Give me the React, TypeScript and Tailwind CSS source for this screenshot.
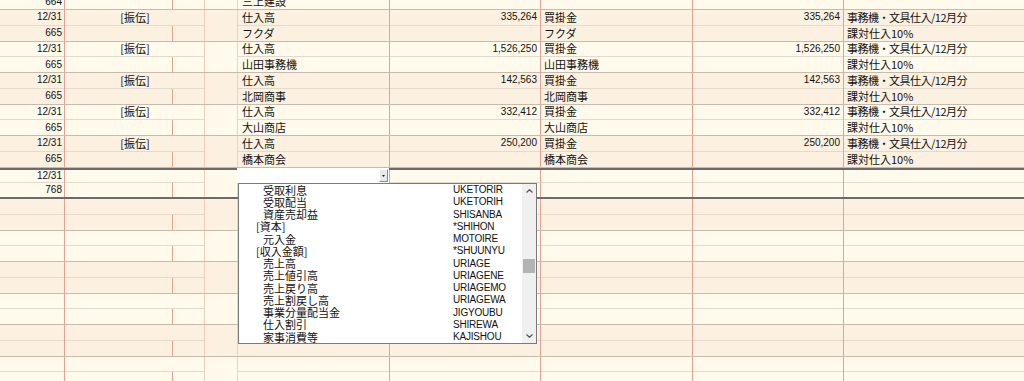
import React from "react";

type Line = { a?: string; b?: string; d?: string; e?: string; f?: string; g?: string; h?: React.ReactNode };

const jp = "font-['Noto_Sans_CJK_JP',sans-serif] text-[11px] leading-none whitespace-nowrap";
const num = "font-['Liberation_Sans',sans-serif] text-[10px] leading-none whitespace-nowrap";
const inner = "border-b border-[#e3dacd]";
const red = "border-r border-[#e2a393]";

function Entry({
  top = {},
  bottom = {},
  light,
  current,
}: {
  top?: Line;
  bottom?: Line;
  light?: boolean;
  current?: boolean;
}) {
  // first row height includes its 1px inner border (border-box)
  const h1 = current ? "h-[13.75px]" : "h-[15.75px]";
  const h2 = current ? "h-[13.9px]" : "h-[14.75px]";
  const bg = light ? "bg-[#fffaec]" : "bg-[#fcf1e0]";
  const edge = current ? "border-y-2 border-[#6b6b6b]" : "border-b border-[#c7bbad]";

  return (
    <div className={`flex ${bg} ${edge}`}>
      <div className={`w-[65px] shrink-0 flex flex-col ${red}`}>
        <div className={`${h1} ${inner} flex items-center justify-end pr-[2px] ${num}`}>{top.a}</div>
        <div className={`${h2} flex items-center justify-end pr-[2px] ${num}`}>{bottom.a}</div>
      </div>
      <div className="w-[140px] shrink-0 flex flex-col border-r border-[#ebcbbb]">
        <div className={`${h1} ${inner} flex items-center justify-center pl-[1px] ${jp}`}>{top.b}</div>
        <div className={`${h2} flex`}>
          <div className={`w-[108px] ${red}`} />
          <div className="flex-1" />
        </div>
      </div>
      <div className="w-[33px] shrink-0 border-r border-[#e8d4c5]" />
      <div className={`w-[152px] shrink-0 flex flex-col ${red}`}>
        <div className={`${h1} ${inner} flex items-center pl-[4px] ${jp}`}>{top.d}</div>
        <div className={`${h2} flex items-center pl-[4px] ${jp}`}>{bottom.d}</div>
      </div>
      <div className={`w-[151px] shrink-0 flex flex-col ${red}`}>
        <div className={`${h1} ${inner} flex items-center justify-end pr-[3px] ${num}`}>{top.e}</div>
        <div className={`${h2}`} />
      </div>
      <div className={`w-[152px] shrink-0 flex flex-col ${red}`}>
        <div className={`${h1} ${inner} flex items-center pl-[3px] ${jp}`}>{top.f}</div>
        <div className={`${h2} flex items-center pl-[3px] ${jp}`}>{bottom.f}</div>
      </div>
      <div className={`w-[151px] shrink-0 flex flex-col ${red}`}>
        <div className={`${h1} ${inner} flex items-center justify-end pr-[3px] ${num}`}>{top.g}</div>
        <div className={`${h2}`} />
      </div>
      <div className="flex-1 flex flex-col">
        <div className={`${h1} ${inner} flex items-center pl-[3px] ${jp}`}>{top.h}</div>
        <div className={`${h2} flex items-center pl-[3px] ${jp}`}>{bottom.h}</div>
      </div>
    </div>
  );
}

const memo = <span className="tracking-[-0.5px]">事務機・文具仕入/12月分</span>;

const entries = [
  { amt: "335,264", name: "フクダ" },
  { amt: "1,526,250", name: "山田事務機" },
  { amt: "142,563", name: "北岡商事" },
  { amt: "332,412", name: "大山商店" },
  { amt: "250,200", name: "橋本商会" },
];

const accounts: [boolean, string, string][] = [
  [true, "受取利息", "UKETORIR"],
  [true, "受取配当", "UKETORIH"],
  [true, "資産売却益", "SHISANBA"],
  [false, "[資本]", "*SHIHON"],
  [true, "元入金", "MOTOIRE"],
  [false, "[収入金額]", "*SHUUNYU"],
  [true, "売上高", "URIAGE"],
  [true, "売上値引高", "URIAGENE"],
  [true, "売上戻り高", "URIAGEMO"],
  [true, "売上割戻し高", "URIAGEWA"],
  [true, "事業分量配当金", "JIGYOUBU"],
  [true, "仕入割引", "SHIREWA"],
  [true, "家事消費等", "KAJISHOU"],
];

export default function App() {
  return (
    <div className="relative h-[381px] w-[1024px] overflow-hidden bg-[#fcf1e0] text-[#111]">
      <div className="-mt-[21.5px]">
        <Entry light bottom={{ a: "664", d: "三上建設" }} />
        {entries.map((en, i) => (
          <Entry
            key={i}
            light={i % 2 === 1}
            top={{ a: "12/31", b: "[振伝]", d: "仕入高", e: en.amt, f: "買掛金", g: en.amt, h: memo }}
            bottom={{ a: "665", d: en.name, f: en.name, h: "課対仕入10%" }}
          />
        ))}
        <Entry current light top={{ a: "12/31" }} bottom={{ a: "768" }} />
        {[0, 1, 2, 3, 4, 5].map((i) => (
          <Entry key={i} light={i % 2 === 1} />
        ))}
      </div>

      {/* account combobox */}
      <div className="absolute left-[237px] top-[168px] h-[15px] w-[152px] bg-white">
        <div className="absolute right-[1px] top-[1px] flex h-[13px] w-[9px] items-center justify-center border border-t-white border-l-white border-r-[#8a8a8a] border-b-[#8a8a8a] bg-[#e9e9e9]">
          <svg width="3" height="2" viewBox="0 0 3 2">
            <polygon points="0,0 3,0 1.5,2" fill="#222" />
          </svg>
        </div>
      </div>

      {/* account list */}
      <div className="absolute left-[238px] top-[183px] h-[161px] w-[299px] border border-[#7a7a7a] bg-white">
        <div className="pr-[14px]">
          {accounts.map(([indent, name, code]) => (
            <div key={code} className="grid h-[12.25px] grid-cols-[214px_1fr] items-center">
              <span className={`${jp} ${indent ? "pl-[24px]" : "pl-[17px]"}`}>{name}</span>
              <span className="font-['Liberation_Sans',sans-serif] text-[10px] leading-none tracking-[-0.2px]">{code}</span>
            </div>
          ))}
        </div>
        <div className="absolute bottom-0 right-0 top-0 w-[14px] bg-[#f0f0f0]">
          <svg className="absolute left-[4px] top-[5px]" width="7" height="4" viewBox="0 0 7 4">
            <polyline points="0.5,3.5 3.5,0.7 6.5,3.5" fill="none" stroke="#555" strokeWidth="1.2" />
          </svg>
          <div className="absolute left-[1px] top-[75px] h-[14px] w-[12px] bg-[#b3b3b3]" />
          <svg className="absolute bottom-[5px] left-[4px]" width="7" height="4" viewBox="0 0 7 4">
            <polyline points="0.5,0.5 3.5,3.3 6.5,0.5" fill="none" stroke="#555" strokeWidth="1.2" />
          </svg>
        </div>
      </div>
    </div>
  );
}
